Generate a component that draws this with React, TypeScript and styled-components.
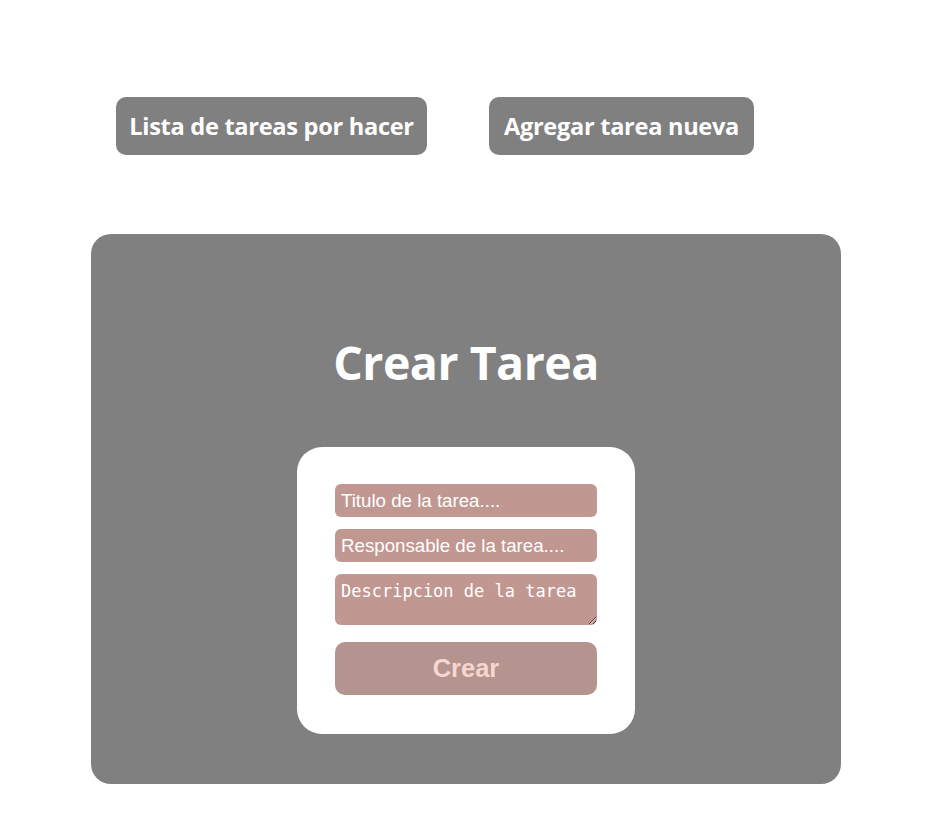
import React from "react";
import styled, { createGlobalStyle } from "styled-components";

const Global = createGlobalStyle`
  html, body { margin: 0; padding: 0; background: #ffffff; }
  body { font-family: "Open Sans", "Noto Sans", sans-serif; }
`;

const Page = styled.div`
  display: flex;
  flex-direction: column;
  padding: 97px 0 0 91px;
`;

const NavRow = styled.nav`
  display: flex;
  gap: 62px;
  padding-left: 25px;
`;

const NavButton = styled.button<{ $w: number }>`
  width: ${(p) => p.$w}px;
  height: 58px;
  border: none;
  border-radius: 10px;
  background: #808080;
  color: #ffffff;
  font-family: "Open Sans", "Noto Sans", sans-serif;
  font-weight: 700;
  font-size: 23.6px;
  letter-spacing: -0.3px;
  padding: 0;
  display: flex;
  align-items: center;
  justify-content: center;
  cursor: pointer;
`;

const Panel = styled.section`
  margin-top: 79px;
  width: 750px;
  height: 550px;
  background: #808080;
  border-radius: 20px;
  display: flex;
  flex-direction: column;
  align-items: center;
  box-sizing: border-box;
  padding-top: 100px;
`;

const Title = styled.h1`
  margin: 0;
  color: #ffffff;
  font-family: "Open Sans", "Noto Sans", sans-serif;
  font-weight: 700;
  font-size: 46.5px;
  line-height: 56px;
  letter-spacing: -0.5px;
`;

const Card = styled.form`
  margin-top: 57px;
  width: 338px;
  height: 287px;
  box-sizing: border-box;
  background: #ffffff;
  border-radius: 25px;
  padding: 37px 38px 0 38px;
  display: flex;
  flex-direction: column;
`;

const Field = styled.input`
  height: 33px;
  box-sizing: border-box;
  border: none;
  border-radius: 6px;
  background: #c09891;
  color: #ffffff;
  font-family: "Liberation Sans", Arial, sans-serif;
  font-size: 18.7px;
  padding: 0 6px;
  margin-bottom: 12px;
  outline: none;
  &::placeholder { color: #ffffff; opacity: 1; }
`;

const Area = styled.textarea`
  height: 51px;
  box-sizing: border-box;
  border: none;
  border-radius: 6px;
  background: #c09891;
  color: #ffffff;
  font-family: "DejaVu Sans Mono", "Liberation Mono", monospace;
  font-size: 17px;
  padding: 7px 6px;
  margin: 0;
  outline: none;
  &::placeholder { color: #ffffff; opacity: 1; }
`;

const Submit = styled.button`
  margin-top: 17px;
  height: 53px;
  border: none;
  border-radius: 10px;
  background: #b3948e;
  color: #f6d6cf;
  font-family: "Liberation Sans", Arial, sans-serif;
  font-weight: 700;
  font-size: 25.5px;
  cursor: pointer;
`;

export default function App() {
  return (
    <>
      <Global />
      <Page>
        <NavRow>
          <NavButton $w={311}>Lista de tareas por hacer</NavButton>
          <NavButton $w={265}>Agregar tarea nueva</NavButton>
        </NavRow>
        <Panel>
          <Title>Crear Tarea</Title>
          <Card onSubmit={(e) => e.preventDefault()}>
            <Field placeholder="Titulo de la tarea...." />
            <Field placeholder="Responsable de la tarea...." />
            <Area placeholder="Descripcion de la tarea" />
            <Submit type="submit">Crear</Submit>
          </Card>
        </Panel>
      </Page>
    </>
  );
}
